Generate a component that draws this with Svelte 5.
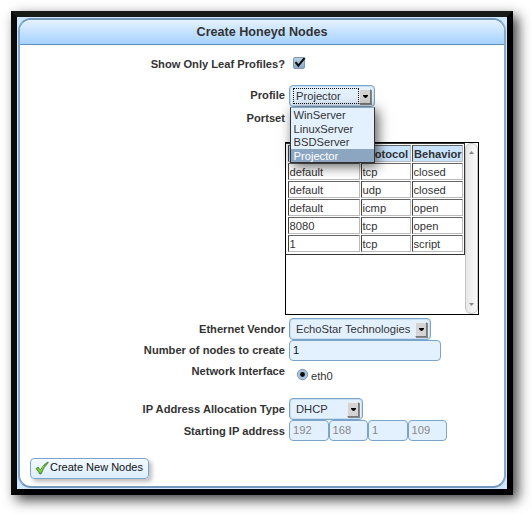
<script>
  const profiles = ['WinServer', 'LinuxServer', 'BSDServer', 'Projector'];
  const ports = [
    ['default', 'tcp', 'closed'],
    ['default', 'udp', 'closed'],
    ['default', 'icmp', 'open'],
    ['8080', 'tcp', 'open'],
    ['1', 'tcp', 'script']
  ];
  const address = ['192', '168', '1', '109'];
</script>

{#snippet arrow()}
  <span class="arrow"><svg width="5" height="3" viewBox="0 0 5 3"><path d="M0 0H5V1L3 3H2L0 1Z" fill="#000" /></svg></span>
{/snippet}

<div class="page">
  <div class="frame">
    <div class="panel">
      <header><span class="t title">Create Honeyd Nodes</span></header>
      <div class="form">
        <div class="row show">
          <b><span class="t">Show Only Leaf Profiles?</span></b>
          <svg class="check" width="16" height="14" viewBox="0 0 16 14">
            <defs><linearGradient id="cb" x2="0" y2="1"><stop stop-color="#b9d0e5" /><stop offset="1" stop-color="#86a8c7" /></linearGradient></defs>
            <rect x="1.5" y="1.5" width="11" height="11" rx="1.5" fill="url(#cb)" stroke="#8198ad" />
            <path d="M3.5 6.2L6.3 9.6L12.7 1.8" fill="none" stroke="#0b0b0b" stroke-width="2" />
          </svg>
        </div>
        <div class="row profile">
          <b><span class="t">Profile</span></b>
          <div class="select focus"><span class="focusbox"><span class="t">Projector</span></span>{@render arrow()}
            <div class="menu">
              {#each profiles as p}
                <div class:chosen={p === 'Projector'}><span class="t">{p}</span></div>
              {/each}
            </div>
          </div>
        </div>
        <div class="row portset"><b><span class="t">Portset</span></b></div>
        <div class="scroller">
          <div class="table">
            <div class="th"></div><div class="th">Protocol</div><div class="th">Behavior</div>
            {#each ports as r}
              {#each r as c}<div class="td">{c}</div>{/each}
            {/each}
          </div>
          <div class="bar">
            <svg width="5" height="3" viewBox="0 0 5 3"><path d="M0 3L2.5 0L5 3Z" fill="#888" /></svg>
            <svg width="5" height="3" viewBox="0 0 5 3"><path d="M0 0L2.5 3L5 0Z" fill="#888" /></svg>
          </div>
        </div>
        <div class="row vendor">
          <b><span class="t">Ethernet Vendor</span></b>
          <div class="select wide"><span class="t">EchoStar Technologies</span>{@render arrow()}</div>
        </div>
        <div class="row number">
          <b><span class="t">Number of nodes to create</span></b>
          <div class="input long">1</div>
        </div>
        <div class="row network">
          <b><span class="t">Network Interface</span></b>
          <svg class="radio" width="13" height="13" viewBox="0 0 13 13">
            <circle cx="6.5" cy="6.5" r="5.2" fill="#a9c4dc" stroke="#8299ae" />
            <circle cx="6.5" cy="6.5" r="2.4" fill="#080808" />
          </svg>
          <span class="t eth">eth0</span>
        </div>
        <div class="row alloc">
          <b><span class="t">IP Address Allocation Type</span></b>
          <div class="select short"><span class="t">DHCP</span>{@render arrow()}</div>
        </div>
        <div class="row start">
          <b><span class="t">Starting IP address</span></b>
          <div class="ips">{#each address as a}<div class="input ip">{a}</div>{/each}</div>
        </div>
        <div class="button">
          <svg width="14" height="14" viewBox="0 0 14 14">
            <path d="M1 7.6L3.2 6.1L5.2 9.2Q8.4 3.5 12.8 1L13.3 1.7Q8.8 5.8 6 13H4.8Q3.4 10 1 7.6Z" fill="#58c41c" stroke="#4b713d" stroke-width=".8" />
            <path d="M3 7.3L5.2 10.6L8.7 5.2" fill="none" stroke="#a0ec54" stroke-width=".8" />
          </svg>
          <span class="t">Create New Nodes</span>
        </div>
      </div>
    </div>
  </div>
</div>

<style>
  :global(body) { background: #fff; overflow: hidden; }
  .page { box-sizing: border-box; width: 532px; height: 514px; padding: 11px; font: 11.2px/14px "Liberation Sans", Arial, sans-serif; color: #333; }
  .page * { box-sizing: border-box; }
  .t { white-space: nowrap; }
  .frame { width: 502px; height: 484px; border: 6px solid; border-color: #181a18 #000 #000 #0b0b0b; background: #cfe8ff; padding: 1px; box-shadow: 5px 5px 12px rgba(0,0,0,.75); }
  .panel { height: 470px; border: 2px solid #7298bd; border-left-color: #82a7ca; border-right-color: #82a7ca; border-radius: 13px; background: #fff; overflow: hidden; }
  header { height: 25px; display: flex; align-items: center; justify-content: center; border-bottom: 1px solid #5f91bf; background: linear-gradient(#e5f2ff, #a5d2ff); font-size: 12.6px; font-weight: bold; }
  .form { display: flex; flex-direction: column; }
  .row { display: flex; align-items: center; }
  b { width: 265px; margin-right: 4px; text-align: right; flex: none; font-size: 11.15px; }
  .show { height: 14px; margin-top: 12px; }
  .check { margin: -2px 0 0 3px; }
  .profile { height: 22px; margin-top: 14px; }
  .profile > b, .number > b { margin-top: -2px; }
  .portset { height: 14px; margin-top: 4px; }
  .select { position: relative; height: 22px; border: 1px solid #7ba4cb; border-radius: 4px; background: #e3f1ff; box-shadow: inset 0 0 0 1px #c9def2; display: flex; align-items: center; justify-content: space-between; padding: 0 2px 0 6px; }
  .focus { width: 86px; padding-left: 3px; }
  .wide { width: 142px; }
  .short { width: 74px; }
  .focusbox { width: 66px; height: 16px; border: 1px dotted #111; padding-left: 2px; line-height: 15px; }
  .arrow { width: 12px; height: 15px; background: #d4d4d4; border: 1px solid; border-color: #eee #777 #777 #eee; box-shadow: 1px 1px 0 #888; margin-right: 1px; display: flex; align-items: center; justify-content: center; }
  .menu { position: absolute; z-index: 3; left: 0; top: 21px; width: 85px; height: 56px; border: 1px solid #333; border-top-color: #8ca3b8; background: #e3f1ff; box-shadow: 3px 3px 12px rgba(0,0,0,.65); }
  .menu div { height: 13.6px; line-height: 15px; padding-left: 2.5px; }
  .menu .chosen { background: #8ca6c2; color: #fff; }
  .scroller { margin: 17px 0 0 265px; width: 194px; height: 173px; border: 1px solid #000; display: flex; }
  .table { width: 179px; height: 112px; border: 1px solid #333; border-width: 1px 1px 1px 0; padding: 1px 0 1px 2px; display: grid; grid-template-columns: 72px 50px 51px; grid-template-rows: repeat(6, 17px); gap: 1px; }
  .td, .th { border: 1px solid; border-color: #666 #bbb #bbb #444; padding-left: 1px; line-height: 16px; overflow: hidden; white-space: nowrap; }
  .td { padding-left: .5px; }
  .th { background: #c9e4ff; font-weight: bold; font-size: 11.15px; }
  .bar { width: 13px; height: 171px; border: 1px solid #c5c5c5; border-radius: 6px; background: linear-gradient(90deg, #e7e7e7, #fafafa); display: flex; flex-direction: column; justify-content: space-between; align-items: center; padding: 7px 0; }
  .vendor { height: 22px; margin-top: 3px; }
  .number { height: 21px; }
  .input { height: 21px; border: 1px solid #7ba4cb; border-radius: 4px; background: #e3f1ff; line-height: 19px; padding-left: 3px; }
  .long { width: 152px; color: #111; }
  .network { height: 22px; }
  .network > b { margin-top: -2px; }
  .radio { margin: 4px 3px 0 7px; }
  .eth { margin-top: 8px; margin-left: -1px; }
  .alloc { height: 22px; margin-top: 15px; }
  .start { height: 21px; }
  .ips { display: flex; }
  .ip { width: 39.5px; color: #888; }
  .button { margin: 17px 0 0 10px; width: 119px; height: 21px; border: 1px solid #7ba4cb; border-radius: 4px; background: linear-gradient(#f4faff, #dceeff); box-shadow: 3px 3px 4px rgba(0,0,0,.25); display: flex; align-items: center; padding-left: 4px; color: #111; gap: 1px; font-size: 11px; }
  .button svg { margin-top: -1px; }
  .button .t { margin-top: -3px; }
</style>
